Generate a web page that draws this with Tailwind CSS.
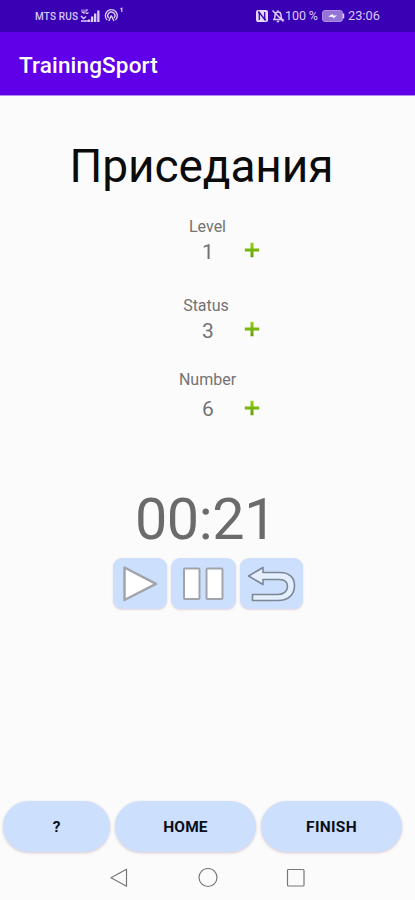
<!DOCTYPE html>
<html lang="ru">
<head>
<meta charset="utf-8">
<title>TrainingSport</title>
<script src="https://cdn.jsdelivr.net/npm/@tailwindcss/browser@4"></script>
</head>
<body class="w-[415px] h-[900px] overflow-hidden bg-[#fbfbfb] font-['Roboto',sans-serif] flex flex-col">
<svg class="absolute w-0 h-0" aria-hidden="true">
  <defs>
    <linearGradient id="green" x1="0" y1="0" x2="0" y2="1"><stop offset="0" stop-color="#93d414"/><stop offset=".5" stop-color="#78b50c"/><stop offset="1" stop-color="#63a006"/></linearGradient>
  </defs>
</svg>

<div class="h-8 shrink-0 bg-[#3a00b3] flex items-center text-[#d9cbfa] pl-[35px] pr-[33px]">
  <span class="text-[10px] leading-none whitespace-nowrap w-[45px] font-medium tracking-[0.15px] pt-px">MTS RUS</span>
  <svg class="w-5 h-[14px]" viewBox="0 0 20 14" fill="#d9cbfa"><path d="M2 .5v3h2.500M4 .5v4.500M6 1h2M6 .5v4h2V3" fill="none" stroke="#d9cbfa" stroke-width="1"/><path d="M1 7l2.500 2.500L6 7.500M1 12h7" fill="none" stroke="#d9cbfa" stroke-width="1.500"/><path d="M8 10.500h2.300V13H8zM11 7.500h2.300V13h-2.300zM14 4.500h2.300V13h-2.300zM17.200 1.500h2.300V13h-2.300z"/></svg>
  <svg class="w-[22px] h-4 ml-1 -mt-[2px]" viewBox="0 0 22 16" fill="none" stroke="#d9cbfa" stroke-width="1.400"><path d="M3.200 13A6 6 0 1 1 11.500 13M4.800 11A3.500 3.500 0 1 1 9.900 11"/><path d="M7.300 8.500L4.800 14M7.300 8.500L9.900 14"/><path d="M16.500 2l1.300-.8V5" stroke-width="1.200"/></svg>
  <div class="ml-auto flex items-center">
    <svg class="w-[14px] h-[14px] -ml-px" viewBox="0 0 14 14"><rect x="1" y="1" width="12" height="12" rx="2" fill="#e4d9fc"/><path d="M4.300 11V3.500l5.400 7V3M4.300 3.500H3M11 10.500H9.500" stroke="#3a00b3" stroke-width="1.300" fill="none"/></svg>
    <svg class="w-[14px] h-[14px] ml-[2px]" viewBox="0 0 14 14" fill="none" stroke="#d9cbfa" stroke-width="1.500"><path d="M3 10.500c1-1 1-2 1-4C4 4 5.200 3 7 3s3 1 3 3.500c0 2 0 3 1.500 4H2M7 1.200V3M5.800 12.500h2.400M1.500 1.500l11 11"/></svg>
    <span class="text-[12.500px] leading-none w-[37px] whitespace-nowrap">100&thinsp;%</span>
    <svg class="w-[23px] h-[12px]" viewBox="0 0 23 12"><rect x=".5" y=".5" width="20" height="11" rx="2.500" fill="#9574d8" stroke="#a98de4"/><path d="M21.500 3.500v5" stroke="#d9cbfa" stroke-width="1.500"/><path d="M6 6.500l5-2.500v1.500h4L11 8.500V7z" fill="#fff"/></svg>
    <span class="text-[12.800px] leading-none w-[34px] ml-[3px] whitespace-nowrap">23:06</span>
  </div>
</div>

<header class="h-[64px] shrink-0 bg-[#6000e8] border-b border-[#b58cf2] flex items-center pl-[19px] pt-[3px]">
  <h1 class="text-white text-[22.500px] font-medium leading-none tracking-[0.15px]">TrainingSport</h1>
</header>

<main class="flex-1 flex flex-col">
  <h2 class="mt-[42px] h-[56px] w-[403px] text-center text-[46px] leading-[56px] text-[#0b0b0b] tracking-[-0.1px] whitespace-nowrap">Приседания</h2>

  <section class="mt-[23px] h-[79px] text-[#737373]">
    <p class="w-[415px] text-center text-base leading-5">Level</p>
    <div class="flex items-center h-8 pl-[190px] -mt-px">
      <span class="w-9 text-center text-[21px] leading-8">1</span>
      <svg class="w-4 h-4 ml-[18px] -mt-1" viewBox="0 0 16 16" fill="url(#green)"><path d="M6.500.8h3v5.700h5.700v3H9.500v5.700h-3V9.500H.8v-3h5.700z"/></svg>
    </div>
  </section>
  <section class="h-[74px] text-[#737373]">
    <p class="w-[412px] text-center text-base leading-5">Status</p>
    <div class="flex items-center h-8 pl-[190px] -mt-px">
      <span class="w-9 text-center text-[21px] leading-8">3</span>
      <svg class="w-4 h-4 ml-[18px] -mt-1" viewBox="0 0 16 16" fill="url(#green)"><path d="M6.500.8h3v5.700h5.700v3H9.500v5.700h-3V9.500H.8v-3h5.700z"/></svg>
    </div>
  </section>
  <section class="h-[79px] text-[#737373]">
    <p class="w-[415px] text-center text-base leading-5">Number</p>
    <div class="flex items-center h-8 pl-[190px] mt-[3px]">
      <span class="w-9 text-center text-[21px] leading-8">6</span>
      <svg class="w-4 h-4 ml-[18px] -mt-[3px]" viewBox="0 0 16 16" fill="url(#green)"><path d="M6.500.8h3v5.700h5.700v3H9.500v5.700h-3V9.500H.8v-3h5.700z"/></svg>
    </div>
  </section>

  <p class="mt-[41px] h-[60px] w-[411px] text-center text-[57.500px] leading-[60px] tracking-[-0.4px] text-[#6b6b6b]">00:21</p>

  <div class="mt-[8px] h-[51px] flex gap-1 pl-[113px]">
    <button class="w-[54px] h-[51px] rounded-[9px] bg-[#cce0fe] shadow-[0_1px_2px_#e0d3d9]" aria-label="Play">
      <svg class="w-[54px] h-[51px]" viewBox="0 0 54 51"><path d="M11.500 9.500v32.500L43 25.800z" fill="#fff" stroke="#a0a4ab" stroke-width="2.500" stroke-linejoin="round"/></svg>
    </button>
    <button class="w-[65px] h-[51px] rounded-[9px] bg-[#cce0fe] shadow-[0_1px_2px_#e0d3d9]" aria-label="Pause">
      <svg class="w-[65px] h-[51px]" viewBox="0 0 65 51" fill="#fff" stroke="#a0a4ab" stroke-width="2"><rect x="13" y="10.500" width="15.500" height="30.500" rx="1"/><rect x="35.500" y="10.500" width="16" height="30.500" rx="1"/></svg>
    </button>
    <button class="w-[63px] h-[51px] rounded-[9px] bg-[#cce0fe] shadow-[0_1px_2px_#e0d3d9]" aria-label="Reset">
      <svg class="w-[63px] h-[51px]" viewBox="0 0 63 51"><path d="M8.500 18L23 9.500V14.500H40C49.500 14.500 54.500 20 54.500 27.500C54.500 36.500 48.500 42.500 38 42.500H12.500V36.500H38C44 36.500 47.500 33 47.500 28.500C47.500 24 44.500 21.500 39.500 21.500H23V26.500z" fill="#e3effe" stroke="#7c8794" stroke-width="1.600" stroke-linejoin="round"/></svg>
    </button>
  </div>

  <div class="mt-auto h-[51px] flex gap-[5px] pl-[3px] text-[#0a0f18] text-[15.500px] font-bold">
    <button class="w-[107px] rounded-full bg-[#cce0fe] shadow-[0_1px_3px_#d8c9cf] pt-[2px]">?</button>
    <button class="w-[141px] rounded-full bg-[#cce0fe] shadow-[0_1px_3px_#d8c9cf] pt-[2px] tracking-[0.1px]">HOME</button>
    <button class="w-[141px] rounded-full bg-[#cce0fe] shadow-[0_1px_3px_#d8c9cf] pt-[2px] tracking-[0.3px]">FINISH</button>
  </div>
</main>

<nav class="h-12 shrink-0 flex items-center pl-[109px] pt-[3px]">
  <svg class="w-5 h-5" viewBox="0 0 20 20" fill="none" stroke="#777" stroke-width="1.200" stroke-linejoin="round"><path d="M17.500 1.200v17L2 9.700z"/></svg>
  <svg class="w-5 h-5 ml-[69px]" viewBox="0 0 20 20" fill="none" stroke="#777" stroke-width="1.200"><circle cx="10" cy="9.500" r="9"/></svg>
  <svg class="w-5 h-5 ml-[68px]" viewBox="0 0 20 20" fill="none" stroke="#777" stroke-width="1.200"><rect x="1.500" y="1.500" width="16.500" height="16.500" rx="1"/></svg>
</nav>
</body>
</html>
